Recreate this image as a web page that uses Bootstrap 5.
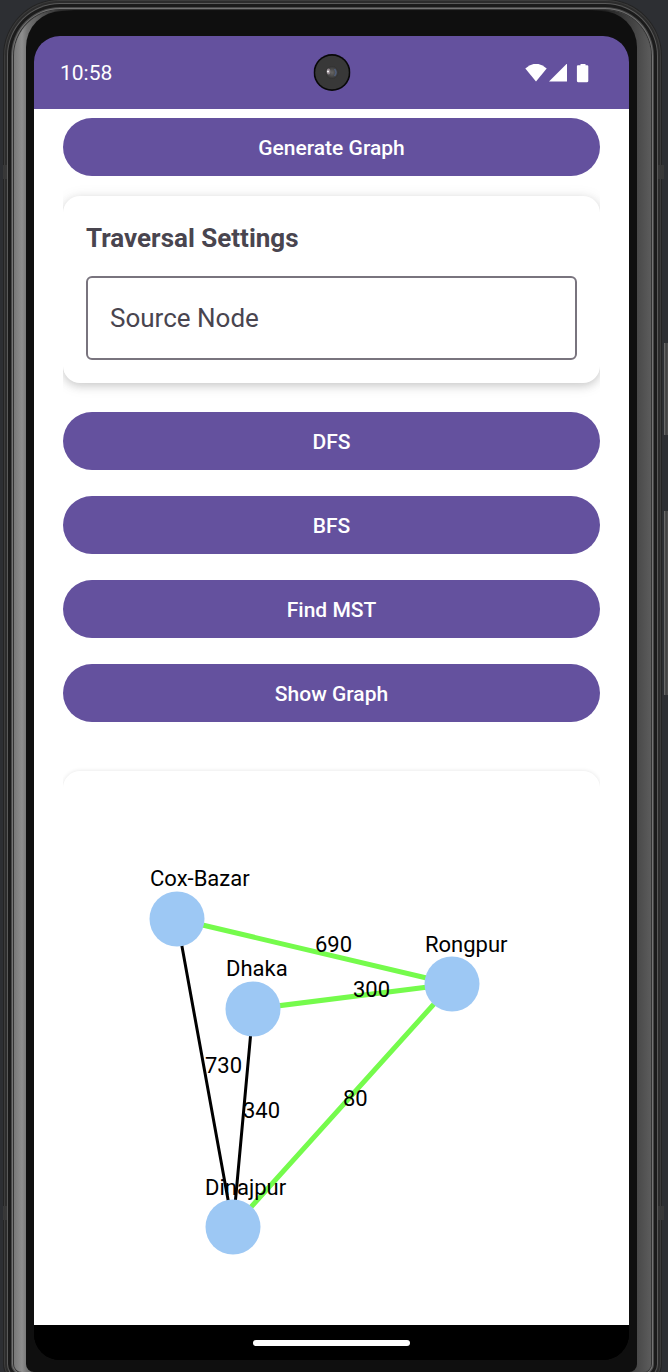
<!DOCTYPE html>
<html lang="en">
<head>
<meta charset="utf-8">
<meta name="viewport" content="width=device-width, initial-scale=1">
<title>Graph Traversal</title>
<link href="https://cdn.jsdelivr.net/npm/bootstrap@5.3.0/dist/css/bootstrap.min.css" rel="stylesheet">
<style>
  :root { --violet: #64519e; --bezel: #0f0f0f; --ink: #49454f; }
  body { background: #2d2f33; font-family: Roboto, "Liberation Sans", sans-serif; overflow-x: hidden; }
  .device { padding: 10px 17px 0 14px; }
  .rim {
    padding: 1px 14px 0 12px;
    border-radius: 46px 46px 8px 8px;
    background: linear-gradient(90deg, #787878 0, #8e8e8e 8px, #747474 13px, #111 60px, #111 calc(100% - 60px), #4a4a4a calc(100% - 13px), #5c5c5c 100%);
    box-shadow: 0 0 0 1px #333, 0 0 0 2px #747474, 0 0 0 3px #484848, 0 0 0 6px #1b1b1b, 0 0 0 7px #5a5a5a, 0 0 0 9px #2c2c2c, 0 0 0 10px #3c3c3c, 0 0 0 11px #242424;
  }
  .bezel { background: var(--bezel); border-radius: 36px 36px 8px 8px; padding: 25px 8px 12px; }
  .screen { background: #000; border-radius: 26px; overflow: hidden; }
  .status { background: var(--violet); height: 73px; padding: 2px 40px 0 26px; font-size: 21px; }
  .camera { width: 37px; height: 37px; top: 18px; }
  .app { background: #fff; padding: 9px 29px 0; }
  .btn-pill {
    --bs-btn-color: #fff; --bs-btn-bg: var(--violet); --bs-btn-hover-color: #fff; --bs-btn-hover-bg: #55438d;
    --bs-btn-active-color: #fff; --bs-btn-active-bg: #4b3b7e; --bs-btn-border-width: 0;
    --bs-btn-font-size: 21px; --bs-btn-font-weight: 500; height: 58px; padding: 8px 12px 5px;
  }
  .clip { overflow: hidden; }
  .panel { border: 0; border-radius: 17px; }
  .settings-clip { padding: 20px 0 29px; }
  .settings { padding: 24px 23px 23px; box-shadow: 0 3px 8px rgba(0,0,0,.15), 0 2px 16px rgba(0,0,0,.09); }
  .settings h2 { font-size: 26px; line-height: 36px; font-weight: 700; color: var(--ink); margin: 0 0 20px; }
  .source { height: 84px; border: 2px solid #79747e; border-radius: 6px; padding: 0 22px; font-size: 26px; color: var(--ink); }
  .source::placeholder { color: var(--ink); opacity: 1; }
  .actions { gap: 26px; padding-bottom: 40px; }
  .graph-clip { padding-top: 9px; }
  .graph { border-radius: 17px 17px 0 0; box-shadow: 0 0 4px rgba(0,0,0,.11); }
  .graph text { font-size: 22px; fill: #000; }
  .gesture { background: #000; height: 35px; }
  .gesture span { width: 157px; height: 6px; background: #fff; }
  .key { width: 4px; right: 0; background: linear-gradient(90deg, #777 0, #3d3d3d 2px, #555 4px); }
  .power { top: 343px; height: 92px; }
  .volume { top: 511px; height: 184px; }
  .seam { width: 4px; height: 14px; background: #383838; }
  .seam-l { left: 3px; } .seam-r { right: 4px; width: 6px; }
  .seam-hi { top: 165px; } .seam-lo { top: 1206px; }
</style>
</head>
<body>
<div class="device position-relative min-vh-100 d-flex flex-column">
  <div class="rim flex-grow-1 d-flex flex-column">
    <div class="bezel flex-grow-1 d-flex flex-column">
      <div class="screen flex-grow-1 d-flex flex-column">
        <header class="status position-relative d-flex align-items-center justify-content-between text-white">
          <span>10:58</span>
          <svg class="camera position-absolute start-50 translate-middle-x" viewBox="0 0 37 37" aria-hidden="true">
            <defs><radialGradient id="lens"><stop offset="0" stop-color="#666"/><stop offset=".6" stop-color="#484848"/><stop offset="1" stop-color="#303030"/></radialGradient></defs>
            <circle cx="18.500" cy="18.500" r="18.500" fill="#080808"/>
            <circle cx="18.500" cy="18.500" r="16.800" fill="#383838"/>
            <circle cx="18.500" cy="18.500" r="6.500" fill="url(#lens)"/>
            <ellipse cx="15" cy="17.500" rx="1.800" ry="3" fill="#8f858b"/>
            <circle cx="14.500" cy="17.500" r="1" fill="#fff"/>
            <path d="M21 15q3 3.500 0 7" stroke="#4f5d78" stroke-width="1.500" fill="none"/>
          </svg>
          <svg width="64" height="20" viewBox="0 0 64 20" fill="#fff" aria-hidden="true">
            <path d="M.3 4.500Q11-5 21.700 4.500L11 17.500Z"/>
            <path d="M42-.5V17.500H24Z"/>
            <path d="M55.500-.5h5v1.700h1.700q1.100 0 1.100 1.100v14.800q0 1.100-1.100 1.100h-9.200q-1.100 0-1.100-1.100V2.300q0-1.100 1.100-1.100h2.500Z"/>
          </svg>
        </header>
        <main class="app flex-grow-1 d-flex flex-column">
          <button type="button" class="btn btn-pill rounded-pill w-100">Generate Graph</button>
          <div class="clip settings-clip">
            <section class="card panel settings">
              <h2><label for="source">Traversal Settings</label></h2>
              <input id="source" class="form-control source" type="text" placeholder="Source Node" aria-label="Source Node">
            </section>
          </div>
          <div class="actions d-grid">
            <button type="button" class="btn btn-pill rounded-pill">DFS</button>
            <button type="button" class="btn btn-pill rounded-pill">BFS</button>
            <button type="button" class="btn btn-pill rounded-pill">Find MST</button>
            <button type="button" class="btn btn-pill rounded-pill">Show Graph</button>
          </div>
          <div class="clip graph-clip flex-grow-1 d-flex flex-column">
            <section class="card panel graph flex-grow-1">
              <svg class="w-100" viewBox="0 0 537 554" role="img" aria-label="Weighted graph of cities">
                <g stroke="#000" stroke-width="3">
                  <path d="M114 148L170 456M190 238L170 456"/>
                </g>
                <g stroke="#75fb4c" stroke-width="5">
                  <path d="M114 148L389 213M190 238L389 213M389 213L170 456"/>
                </g>
                <g fill="#9dc8f4">
                  <circle cx="114" cy="148" r="27.500"/>
                  <circle cx="190" cy="238" r="27.500"/>
                  <circle cx="389" cy="213" r="27.500"/>
                  <circle cx="170" cy="456" r="27.500"/>
                </g>
                <text x="87" y="115">Cox-Bazar</text>
                <text x="163" y="205">Dhaka</text>
                <text x="362" y="181">Rongpur</text>
                <text x="142" y="424">Dinajpur</text>
                <text x="252" y="181">690</text>
                <text x="290" y="226">300</text>
                <text x="142" y="302">730</text>
                <text x="180" y="347">340</text>
                <text x="280" y="335">80</text>
              </svg>
            </section>
          </div>
        </main>
        <footer class="gesture d-flex align-items-center justify-content-center"><span class="rounded-pill"></span></footer>
      </div>
    </div>
  </div>
  <i class="key power position-absolute"></i>
  <i class="key volume position-absolute"></i>
  <i class="seam seam-l seam-hi position-absolute"></i>
  <i class="seam seam-r seam-hi position-absolute"></i>
  <i class="seam seam-l seam-lo position-absolute"></i>
  <i class="seam seam-r seam-lo position-absolute"></i>
</div>
<script src="https://cdn.jsdelivr.net/npm/bootstrap@5.3.0/dist/js/bootstrap.bundle.min.js"></script>
</body>
</html>
